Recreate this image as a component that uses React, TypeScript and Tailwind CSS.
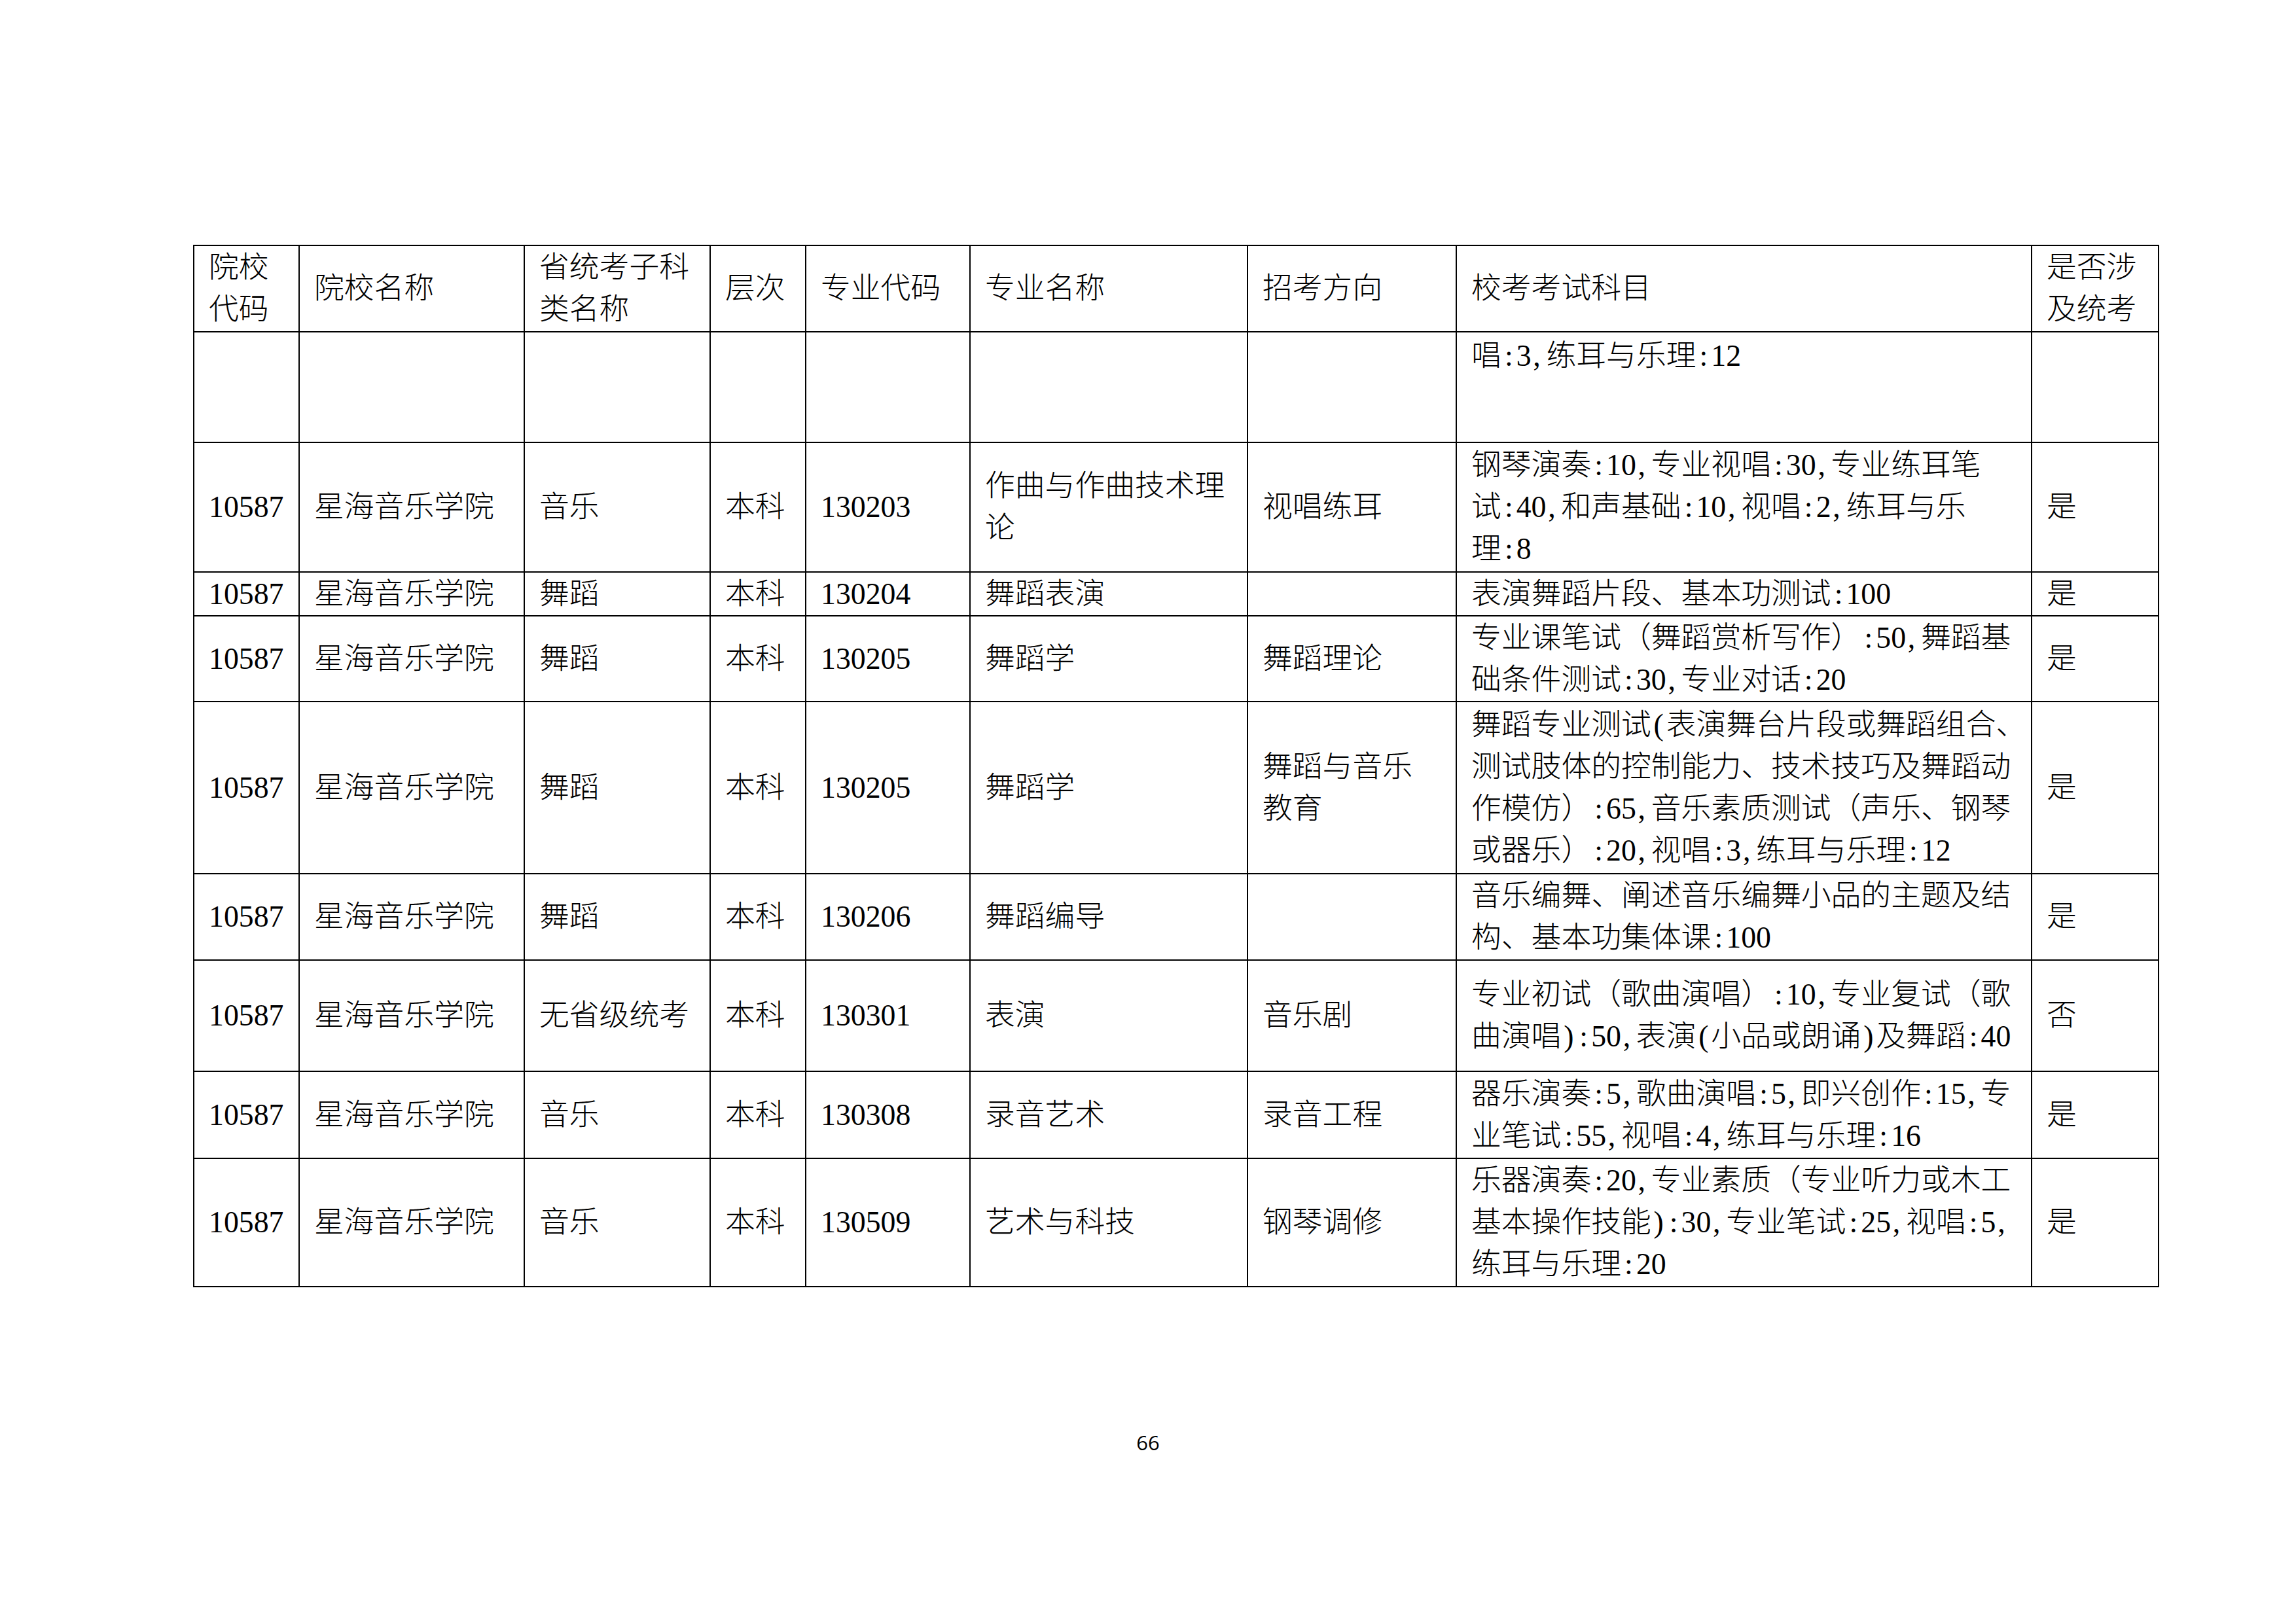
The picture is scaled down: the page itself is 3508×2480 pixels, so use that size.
import React from "react";

type Cell = React.ReactNode;

const colClasses = [
  "w-[161px]",
  "w-[344px]",
  "w-[284px]",
  "w-[146px]",
  "w-[251px]",
  "w-[424px]",
  "w-[319px]",
  "w-[879px]",
  "w-[194px]",
];

// Render text with half-width ASCII punctuation given SimSun-like half-em advance.
function T({ s }: { s: string }) {
  const lines = s.split("\n");
  return (
    <>
      {lines.map((line, li) => (
        <React.Fragment key={li}>
          {li > 0 && <br />}
          {line.split(/([:,()])/).map((part, pi) => {
            if (part === ",")
              return (
                <span key={pi} className="inline-block w-[0.5em] pl-[0.06em] text-left">
                  ,
                </span>
              );
            if (part === ":" || part === "(" || part === ")")
              return (
                <span key={pi} className="inline-block w-[0.5em] text-center">
                  {part}
                </span>
              );
            return <React.Fragment key={pi}>{part}</React.Fragment>;
          })}
        </React.Fragment>
      ))}
    </>
  );
}

const header: string[] = [
  "院校\n代码",
  "院校名称",
  "省统考子科\n类名称",
  "层次",
  "专业代码",
  "专业名称",
  "招考方向",
  "校考考试科目",
  "是否涉\n及统考",
];

type Row = { h: string; cells: string[] };

const school = "星海音乐学院";

const rows: Row[] = [
  {
    h: "h-[198px]",
    cells: [
      "10587",
      school,
      "音乐",
      "本科",
      "130203",
      "作曲与作曲技术理\n论",
      "视唱练耳",
      "钢琴演奏:10,专业视唱:30,专业练耳笔\n试:40,和声基础:10,视唱:2,练耳与乐\n理:8",
      "是",
    ],
  },
  {
    h: "h-[67px]",
    cells: ["10587", school, "舞蹈", "本科", "130204", "舞蹈表演", "", "表演舞蹈片段、基本功测试:100", "是"],
  },
  {
    h: "h-[131px]",
    cells: [
      "10587",
      school,
      "舞蹈",
      "本科",
      "130205",
      "舞蹈学",
      "舞蹈理论",
      "专业课笔试（舞蹈赏析写作）:50,舞蹈基\n础条件测试:30,专业对话:20",
      "是",
    ],
  },
  {
    h: "h-[263px]",
    cells: [
      "10587",
      school,
      "舞蹈",
      "本科",
      "130205",
      "舞蹈学",
      "舞蹈与音乐\n教育",
      "舞蹈专业测试(表演舞台片段或舞蹈组合、\n测试肢体的控制能力、技术技巧及舞蹈动\n作模仿）:65,音乐素质测试（声乐、钢琴\n或器乐）:20,视唱:3,练耳与乐理:12",
      "是",
    ],
  },
  {
    h: "h-[132px]",
    cells: [
      "10587",
      school,
      "舞蹈",
      "本科",
      "130206",
      "舞蹈编导",
      "",
      "音乐编舞、阐述音乐编舞小品的主题及结\n构、基本功集体课:100",
      "是",
    ],
  },
  {
    h: "h-[170px]",
    cells: [
      "10587",
      school,
      "无省级统考",
      "本科",
      "130301",
      "表演",
      "音乐剧",
      "专业初试（歌曲演唱）:10,专业复试（歌\n曲演唱):50,表演(小品或朗诵)及舞蹈:40",
      "否",
    ],
  },
  {
    h: "h-[133px]",
    cells: [
      "10587",
      school,
      "音乐",
      "本科",
      "130308",
      "录音艺术",
      "录音工程",
      "器乐演奏:5,歌曲演唱:5,即兴创作:15,专\n业笔试:55,视唱:4,练耳与乐理:16",
      "是",
    ],
  },
  {
    h: "h-[196px]",
    cells: [
      "10587",
      school,
      "音乐",
      "本科",
      "130509",
      "艺术与科技",
      "钢琴调修",
      "乐器演奏:20,专业素质（专业听力或木工\n基本操作技能):30,专业笔试:25,视唱:5,\n练耳与乐理:20",
      "是",
    ],
  },
];

const td = "border-2 border-black pl-[22px] pr-[6px] py-0 align-middle text-left whitespace-nowrap";
const tdTop = "border-2 border-black pl-[22px] pr-[6px] pt-[4px] pb-0 align-top text-left whitespace-nowrap";

export default function App() {
  return (
    <div
      className="w-[3508px] h-[2480px] bg-white text-black flex flex-col"
      style={{ fontFamily: '"Liberation Serif", "Noto Sans CJK SC", serif' }}
    >
      <div className="pt-[374px] pl-[295px]">
        <table className="w-[3004px] table-fixed border-collapse text-[45.8px] leading-[64px] font-light">
          <colgroup>
            {colClasses.map((c, i) => (
              <col key={i} className={c} />
            ))}
          </colgroup>
          <tbody>
            <tr className="h-[132px]">
              {header.map((c, i) => (
                <td key={i} className={td}>
                  <T s={c} />
                </td>
              ))}
            </tr>
            <tr className="h-[169px]">
              {Array.from({ length: 9 }).map((_, i) => (
                <td key={i} className={i === 7 ? tdTop : td}>
                  {i === 7 ? <T s="唱:3,练耳与乐理:12" /> : null}
                </td>
              ))}
            </tr>
            {rows.map((r, ri) => (
              <tr key={ri} className={r.h}>
                {r.cells.map((c, i) => (
                  <td key={i} className={td}>
                    <T s={c} />
                  </td>
                ))}
              </tr>
            ))}
          </tbody>
        </table>
      </div>
      <div
        className="mt-[222px] text-center text-[31px] leading-[31px] text-black"
        style={{ fontFamily: '"Open Sans", "Liberation Sans", sans-serif' }}
      >
        66
      </div>
    </div>
  );
}
